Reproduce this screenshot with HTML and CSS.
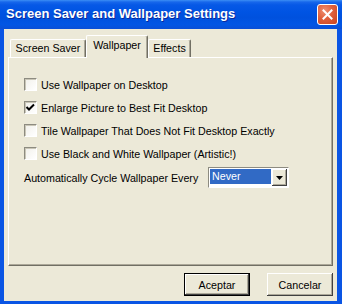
FILE: index.html
```html
<!DOCTYPE html>
<html>
<head>
    <title>Screen Saver and Wallpaper Settings</title>
    <link rel="stylesheet" href="styles.css">
</head>
<body>
    <div class="window">
        <div class="titlebar">
            <span class="title">Screen Saver and Wallpaper Settings</span>
            <button class="close" aria-label="Close">
                <svg width="11" height="11" viewBox="0 0 11 11">
                    <path d="M1.5 1.5 L9.5 9.5 M9.5 1.5 L1.5 9.5" stroke="#fff" stroke-width="2" stroke-linecap="square"/>
                </svg>
            </button>
        </div>
        <div class="frame">
            <div class="client">
                <div class="tabs">
                    <div class="tab tab-saver">Screen Saver</div>
                    <div class="tab tab-wallpaper active">Wallpaper</div>
                    <div class="tab tab-effects">Effects</div>
                </div>

                <div class="panel">
                    <label class="option"><span class="check"></span>Use Wallpaper on Desktop</label>
                    <label class="option">
                        <span class="check">
                            <svg width="11" height="11" viewBox="0 0 11 11">
                                <path d="M1.5 5 L4 7.5 L9 2.5" stroke="#000" stroke-width="2" fill="none"/>
                            </svg>
                        </span>Enlarge Picture to Best Fit Desktop
                    </label>
                    <label class="option"><span class="check"></span>Tile Wallpaper That Does Not Fit Desktop Exactly</label>
                    <label class="option"><span class="check"></span>Use Black and White Wallpaper (Artistic!)</label>

                    <div class="cycle">
                        <span class="cycle-label">Automatically Cycle Wallpaper Every</span>
                        <div class="combo">
                            <span class="combo-value">Never</span>
                            <span class="combo-btn">
                                <svg width="7" height="4" viewBox="0 0 7 4">
                                    <path d="M0 0 H7 L3.5 4 Z" fill="#000"/>
                                </svg>
                            </span>
                        </div>
                    </div>
                </div>

                <div class="buttons">
                    <button class="btn default">Aceptar</button>
                    <button class="btn">Cancelar</button>
                </div>
            </div>
        </div>
    </div>
</body>
</html>
```

FILE: styles.css
```css
* {
    box-sizing: border-box;
}

body {
    margin: 0;
    font-family: "Liberation Sans", Arial, sans-serif;
    font-size: 10.7px;
    color: #000;
}

.window {
    width: 342px;
    height: 304px;
    display: flex;
    flex-direction: column;
}

/* title bar */
.titlebar {
    height: 29px;
    flex: none;
    display: flex;
    align-items: flex-start;
    background: linear-gradient(to bottom, #3c8ef5 0, #1767eb 2px, #0658e6 5px, #0054e3 12px, #0051de 60%, #0256e4 85%, #0a4fd6 100%);
}

.title {
    padding: 6px 0 0 6px;
    color: #fff;
    font-weight: bold;
    font-size: 13px;
    line-height: 16px;
    text-shadow: 1px 1px #0c2a9c;
}

.close {
    margin: 4px 4px 0 auto;
    width: 21px;
    height: 21px;
    padding: 0;
    border: 1px solid #fff;
    border-radius: 3px;
    background: radial-gradient(circle at 35% 30%, #ee8f72 0, #e0603c 45%, #c9431f 100%);
    display: flex;
    align-items: center;
    justify-content: center;
}

/* blue frame around the client area */
.frame {
    flex: 1;
    display: flex;
    padding: 0 5px 3px 4px;
    background: #0a55e4;
}

.client {
    flex: 1;
    display: flex;
    flex-direction: column;
    background: #ece9d8;
    padding: 6px 4px 5px 4px;
}

/* tabs */
.tabs {
    display: flex;
    align-items: flex-end;
    padding-left: 2px;
    height: 22px;
}

.tab {
    height: 18px;
    text-align: center;
    line-height: 16px;
    border-top: 1px solid #fff;
    border-left: 1px solid #fff;
    border-right: 1px solid #716f64;
    border-radius: 2px 2px 0 0;
    box-shadow: inset -1px 0 #aca899;
}

.tab-saver {
    width: 76px;
}

.tab-wallpaper {
    width: 62px;
}

.tab-effects {
    width: 43px;
}

.tab.active {
    height: 23px;
    margin-bottom: -1px;
    padding-top: 2px;
    line-height: 15px;
    background: #ece9d8;
    position: relative;
    z-index: 1;
}

/* tab page */
.panel {
    height: 209px;
    flex: none;
    padding: 15px 0 0 15px;
    border-top: 1px solid #fff;
    border-left: 1px solid #fff;
    border-right: 1px solid #716f64;
    border-bottom: 1px solid #716f64;
    box-shadow: inset -1px -1px #aca899;
}

.option {
    display: flex;
    align-items: center;
    height: 23px;
}

.check {
    width: 13px;
    height: 13px;
    margin-right: 4px;
    flex: none;
    display: flex;
    align-items: center;
    justify-content: center;
    background: linear-gradient(135deg, #f1f0ea 0, #ffffff 100%);
    border: 1px solid;
    border-color: #8d8b80 #ffffff #ffffff #8d8b80;
    box-shadow: inset 1px 1px #c9c6b7;
}

.cycle {
    display: flex;
    align-items: center;
    height: 23px;
    margin-top: 1px;
}

.cycle-label {
    width: 184px;
    flex: none;
}

.combo {
    width: 81px;
    height: 21px;
    display: flex;
    padding: 1px;
    background: #fff;
    border: 1px solid;
    border-color: #8d8b80 #ffffff #ffffff #8d8b80;
}

.combo-value {
    flex: 1;
    background: #316ac5;
    color: #fff;
    padding-left: 2px;
    line-height: 15px;
    margin: 0 1px 2px 0;
}

.combo-btn {
    width: 15px;
    height: 17px;
    flex: none;
    display: flex;
    align-items: center;
    justify-content: center;
    background: #ece9d8;
    box-shadow: inset -1px -1px #404040, inset 1px 1px #fff, inset -2px -2px #aca899;
}

/* dialog buttons */
.buttons {
    display: flex;
    justify-content: flex-end;
    gap: 17px;
    margin-top: 7px;
}

.btn {
    width: 66px;
    height: 23px;
    padding: 0;
    font-family: inherit;
    font-size: 10.7px;
    color: #000;
    background: #ece9d8;
    border: none;
    box-shadow: inset -1px -1px #404040, inset 1px 1px #fff, inset -2px -2px #aca899;
}

.btn.default {
    border: 1px solid #000;
}
```
